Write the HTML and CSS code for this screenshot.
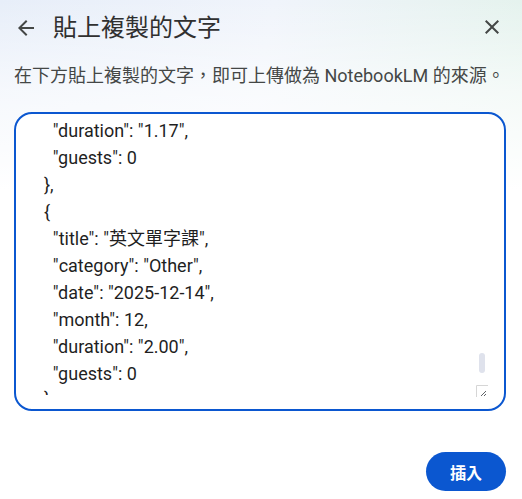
FILE: index.html
```html
<!DOCTYPE html>
<html>
<head>
    <link rel="stylesheet" href="styles.css">
</head>
<body>
    <div class="dialog">
        <div class="dialog-header">
            <button class="icon-btn back-btn" aria-label="返回">
                <svg viewBox="0 0 24 24" width="24" height="24"><path d="M20 11H7.83l5.59-5.59L12 4l-8 8 8 8 1.41-1.41L7.83 13H20v-2z"/></svg>
            </button>
            <h1 class="dialog-title">貼上複製的文字</h1>
            <button class="icon-btn close-btn" aria-label="關閉">
                <svg viewBox="0 0 24 24" width="24" height="24"><path d="M19 6.41L17.59 5 12 10.59 6.41 5 5 6.41 10.59 12 5 17.59 6.41 19 12 13.41 17.59 19 19 17.59 13.41 12z"/></svg>
            </button>
        </div>

        <p class="hint">在下方貼上複製的文字，即可上傳做為 NotebookLM 的來源。</p>

        <div class="paste-box">
            <div class="paste-text">    "duration": "1.17",
    "guests": 0
  },
  {
    "title": "英文單字課",
    "category": "Other",
    "date": "2025-12-14",
    "month": 12,
    "duration": "2.00",
    "guests": 0</div>
            <!-- the textarea is scrolled: only the top of the next brace peeks out -->
            <div class="paste-tail">  }</div>
            <div class="scroll-thumb"></div>
            <svg class="resize-grip" viewBox="0 0 12 12" width="12" height="12">
                <path d="M0.5 12V0.5H12" fill="none" stroke="#d6d6d6" stroke-width="1"/>
                <path d="M5 11L10 6M8 11L10 9" fill="none" stroke="#5f6368" stroke-width="1"/>
            </svg>
        </div>

        <div class="actions">
            <button class="insert-btn">插入</button>
        </div>
    </div>
</body>
</html>
```

FILE: styles.css
```css
:root {
    --ink: #1f1f1f;
    --muted: #444746;
    --blue: #0b57d0;
    --thumb: #dfe2ec;
}

html, body {
    margin: 0;
    height: 100%;
}

body {
    font-family: Roboto, "Noto Sans CJK TC", sans-serif;
    color: var(--ink);
    background:
        linear-gradient(180deg, rgba(255, 255, 255, 0) 0, rgba(255, 255, 255, 0.6) 90px, #fff 190px),
        linear-gradient(100deg, #e7eef9 0%, #f0f4fb 45%, #e1f2e9 100%);
}

.dialog {
    padding: 0 16px 0 14px;
}

.dialog-header {
    display: flex;
    align-items: center;
    height: 55px;
}

.icon-btn {
    background: transparent;
    border: none;
    padding: 0;
    width: 24px;
    height: 24px;
    display: flex;
    cursor: pointer;
}

.icon-btn svg {
    fill: #444746;
}

.close-btn {
    margin-left: auto;
    margin-right: 2px;
    margin-top: -2px;
}

.dialog-title {
    margin: 0 0 0 15px;
    font-size: 24px;
    font-weight: 400;
    line-height: 32px;
    color: #303030;
}

.hint {
    margin: 9px 0 0;
    font-size: 18px;
    line-height: 24px;
    color: var(--muted);
    white-space: nowrap;
}

.paste-box {
    position: relative;
    margin-top: 24px;
    height: 295px;
    border: 2px solid var(--blue);
    border-radius: 18px;
    background: rgba(255, 255, 255, 0.92);
}

.paste-text,
.paste-tail {
    padding-left: 19px;
    white-space: pre;
    font-size: 18px;
    line-height: 27px;
    color: var(--ink);
}

.paste-text {
    padding-top: 3px;
}

.paste-tail {
    height: 8px;
    overflow: hidden;
    line-height: 24px;
}

.scroll-thumb {
    position: absolute;
    right: 19px;
    top: 239px;
    width: 6px;
    height: 20px;
    border-radius: 3px;
    background: var(--thumb);
}

.resize-grip {
    position: absolute;
    right: 16px;
    top: 271px;
}

.actions {
    display: flex;
    justify-content: flex-end;
    margin-top: 41px;
}

.insert-btn {
    height: 39px;
    width: 80px;
    border: none;
    border-radius: 20px;
    background: var(--blue);
    color: #fff;
    font-family: Roboto, "Noto Sans CJK TC", sans-serif;
    font-size: 16px;
    font-weight: 700;
    cursor: pointer;
}
```
